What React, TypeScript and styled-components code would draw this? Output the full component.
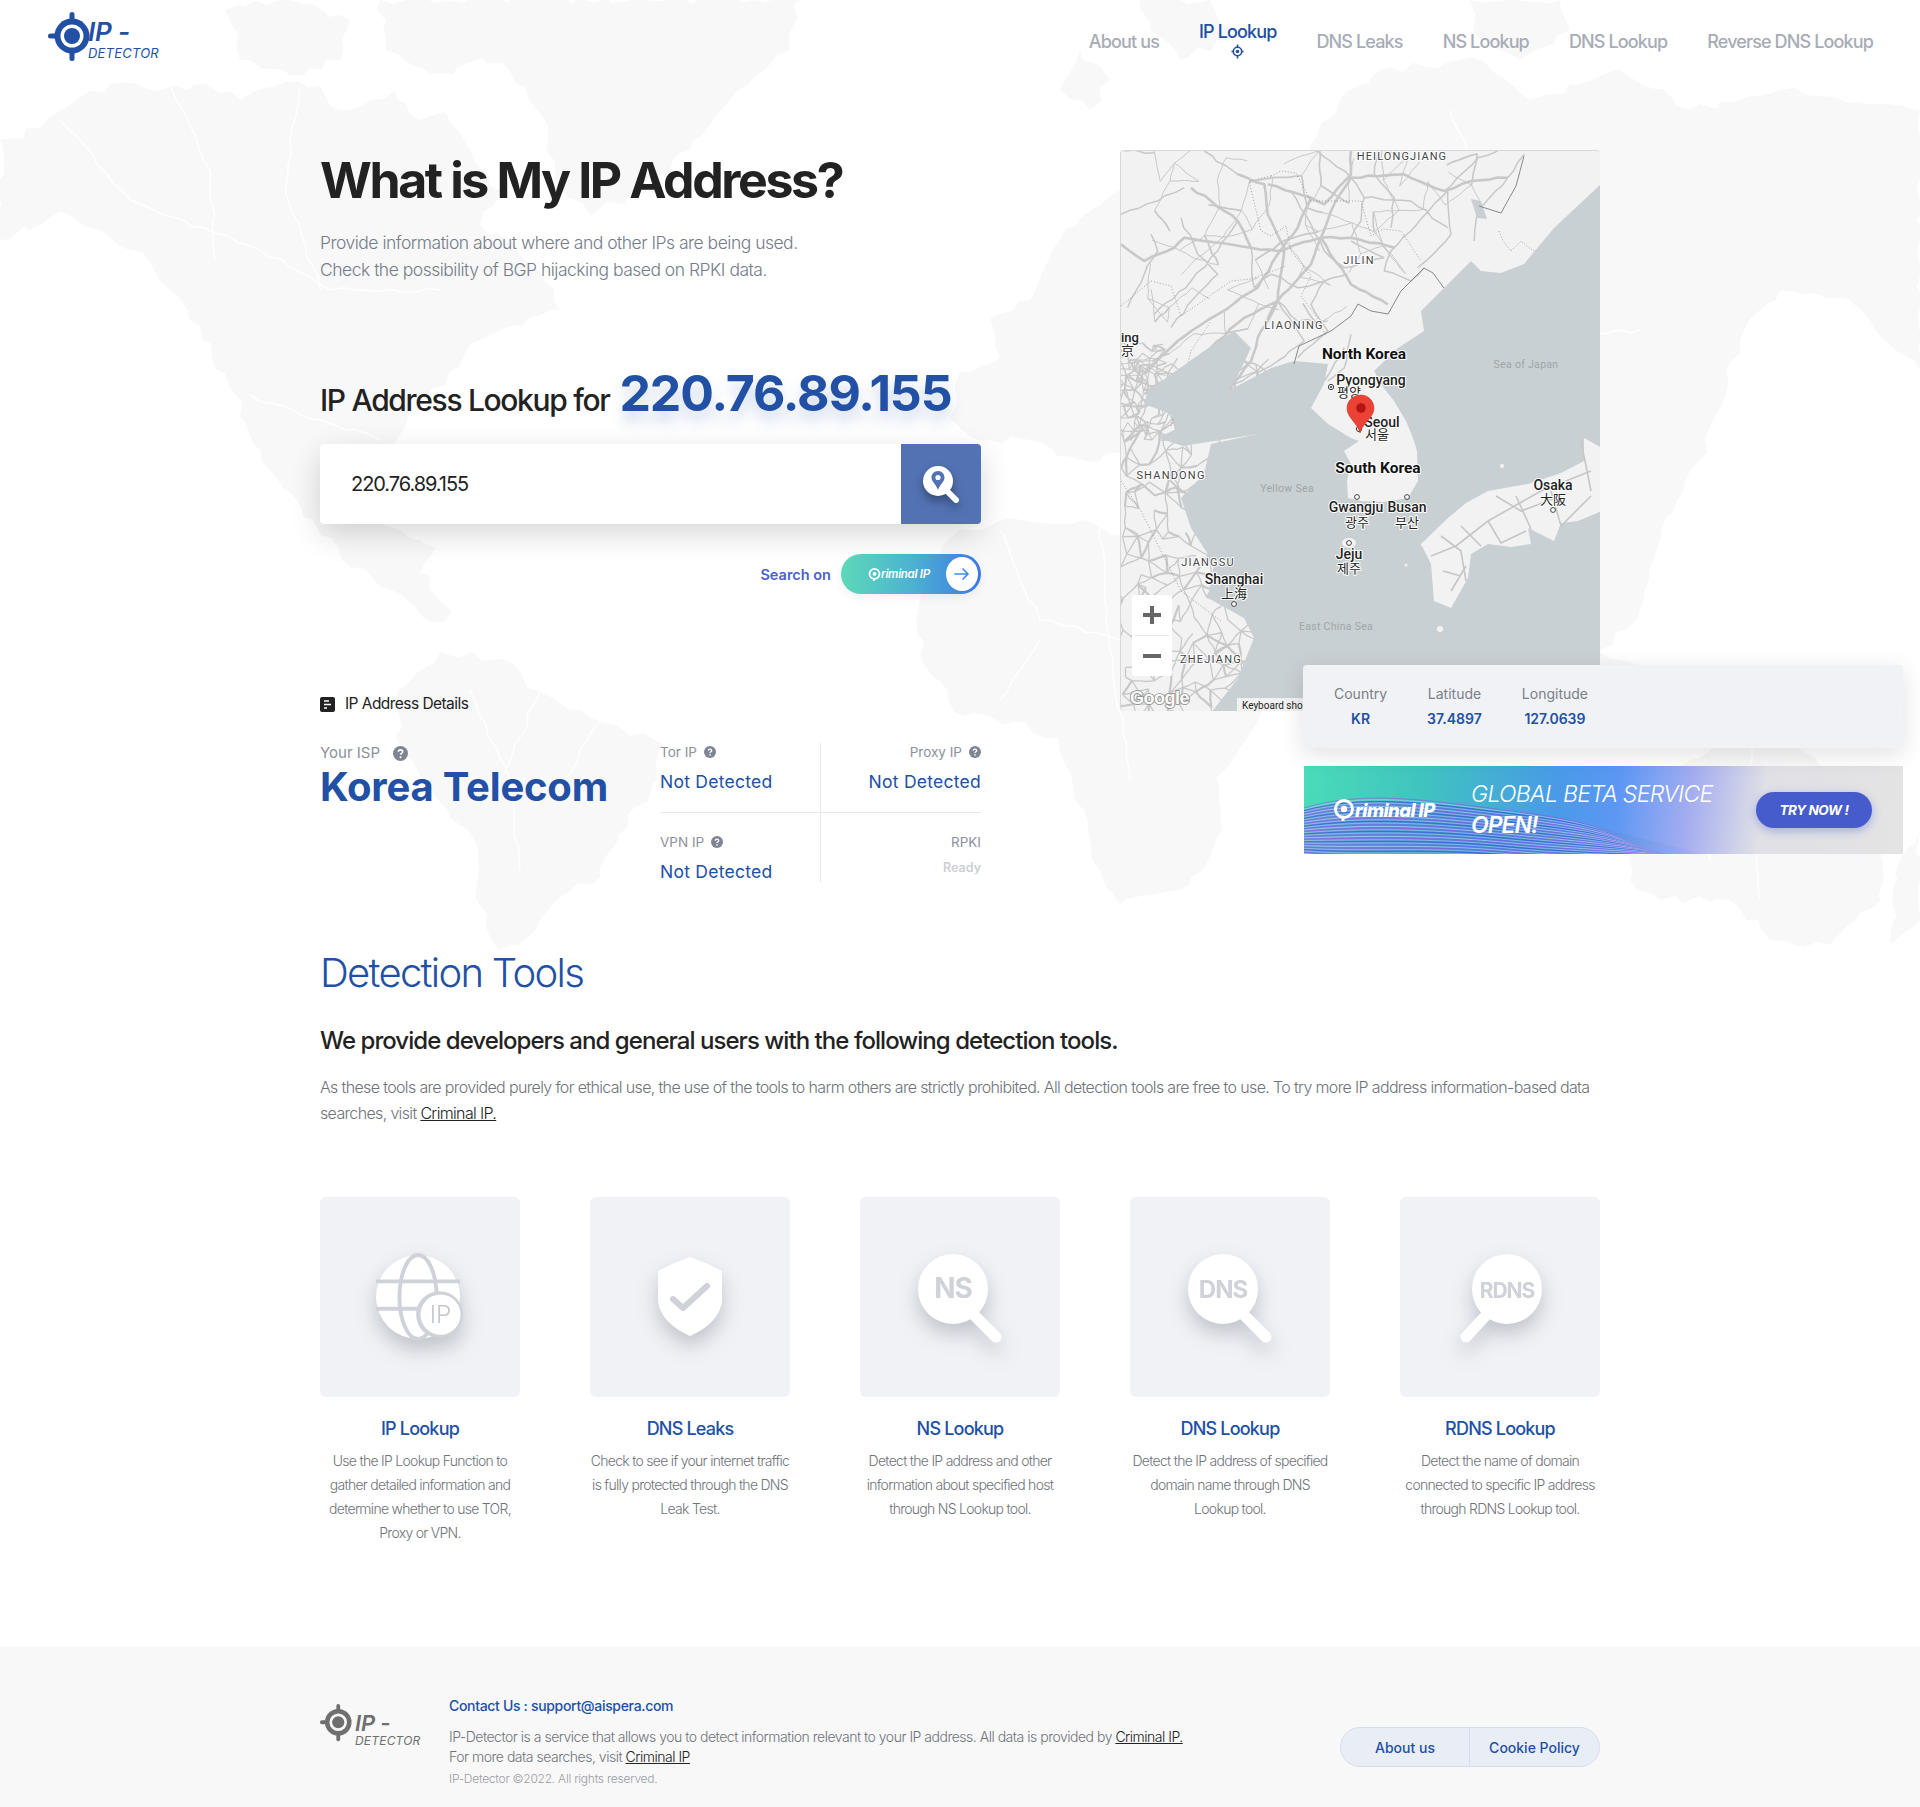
import React from "react";
import styled, { createGlobalStyle } from "styled-components";

const BLUE = "#2150a5";
const FONT = `Inter, "Noto Sans", sans-serif`;
const ROBOTO = `Roboto, "Noto Sans CJK KR", sans-serif`;

const Global = createGlobalStyle`
  html, body { margin: 0; padding: 0; background: #fff; }
  body { font-family: ${FONT}; color: #222; width: 1920px; }
  * { box-sizing: border-box; }
  a { color: inherit; }
`;

const Page = styled.div`
  position: relative;
  width: 1920px;
  height: 1807px;
  overflow: hidden;
  display: flex;
  flex-direction: column;
`;
const WorldLayer = styled.svg`
  position: absolute;
  left: 0;
  top: 0;
  width: 1920px;
  height: 960px;
  z-index: 0;
`;
const Header = styled.header`
  position: relative;
  z-index: 1;
  height: 150px;
  padding: 12px 47px 0 48px;
  display: flex;
  justify-content: space-between;
  align-items: flex-start;
`;
const LogoBox = styled.div<{ $small?: boolean }>`
  display: flex;
  align-items: flex-start;
  color: ${(p) => (p.$small ? "#6f6f6f" : BLUE)};
  svg { flex-shrink: 0; }
`;
const LogoWords = styled.div<{ $small?: boolean }>`
  margin-left: ${(p) => (p.$small ? -3 : -10)}px;
  padding-top: ${(p) => (p.$small ? 8 : 7)}px;
  font-style: italic;
  display: flex;
  flex-direction: column;
`;
const LogoIP = styled.span<{ $small?: boolean }>`
  font-size: ${(p) => (p.$small ? 22 : 26)}px;
  line-height: ${(p) => (p.$small ? 22 : 26)}px;
  font-weight: 600;
  letter-spacing: -0.2px;
`;
const LogoDet = styled.span<{ $small?: boolean }>`
  font-size: ${(p) => (p.$small ? 12 : 13)}px;
  line-height: ${(p) => (p.$small ? 14 : 16)}px;
  font-weight: 400;
  letter-spacing: 0.2px;
`;
const Nav = styled.nav`
  display: flex;
  gap: 40px;
  align-items: flex-start;
  padding-top: 9px;
`;
const NavItem = styled.a<{ $active?: boolean }>`
  display: flex;
  flex-direction: column;
  align-items: center;
  font-size: 18px;
  font-weight: 500;
  letter-spacing: -0.86px;
  line-height: 22px;
  padding-top: ${(p) => (p.$active ? 0 : 10)}px;
  color: ${(p) => (p.$active ? BLUE : "#a7acb6")};
  svg { margin-top: 1px; }
`;
const Main = styled.main`
  position: relative;
  z-index: 1;
  padding-left: 320px;
  flex: 1;
`;
const Hero = styled.section`
  display: flex;
  gap: 139px;
  align-items: flex-start;
`;
const LeftCol = styled.div`
  width: 661px;
  display: flex;
  flex-direction: column;
`;
const Title = styled.h1`
  margin: 0;
  font-size: 50px;
  line-height: 60px;
  font-weight: 700;
  letter-spacing: -2.4px;
  color: #222;
`;
const Lead = styled.p`
  margin: 19px 0 0;
  font-size: 17.5px;
  line-height: 27px;
  font-weight: 300;
  letter-spacing: -0.5px;
  color: #757c8a;
`;
const LookupLine = styled.div`
  margin-top: 79px;
  display: flex;
  align-items: center;
  gap: 10px;
  height: 62px;
`;
const LookupLabel = styled.span`
  font-size: 30px;
  font-weight: 500;
  letter-spacing: -1.33px;
  color: #222;
  padding-top: 13px;
`;
const LookupIP = styled.span`
  font-size: 50px;
  font-weight: 700;
  letter-spacing: -1.1px;
  color: ${BLUE};
  text-shadow: 0 10px 14px rgba(33, 80, 165, 0.22);
`;
const SearchBox = styled.div`
  margin-top: 20px;
  height: 80px;
  background: #fff;
  border-radius: 4px;
  box-shadow: 0 10px 30px rgba(0, 0, 0, 0.16);
  display: flex;
  align-items: center;
  justify-content: space-between;
`;
const SearchValue = styled.span`
  margin-left: 31px;
  font-size: 20px;
  font-weight: 400;
  letter-spacing: -1.05px;
  color: #222;
`;
const SearchBtn = styled.div`
  width: 80px;
  height: 80px;
  background: #5272b3;
  border-radius: 0 4px 4px 0;
  display: flex;
  align-items: center;
  justify-content: center;
`;
const SearchOn = styled.div`
  margin-top: 30px;
  display: flex;
  justify-content: flex-end;
  align-items: center;
  gap: 10px;
`;
const SearchOnText = styled.span`
  font-size: 14.5px;
  font-weight: 600;
  color: #4a5fd0;
`;
const CriminalPill = styled.div`
  width: 140px;
  height: 40px;
  border-radius: 20px;
  background: linear-gradient(90deg, #5cd9b8 0%, #4cb3d0 50%, #3c78e8 100%);
  display: flex;
  align-items: center;
  justify-content: space-between;
  padding: 0 3px 0 27px;
  box-shadow: 0 4px 10px rgba(0, 0, 0, 0.06);
  color: #fff;
`;
const PillCircle = styled.div`
  width: 32px;
  height: 34px;
  border-radius: 50%;
  background: #fff;
  display: flex;
  align-items: center;
  justify-content: center;
`;
const MiniBrand = styled.span`
  display: flex;
  align-items: center;
  font-size: 11.5px;
  font-style: italic;
  font-weight: 600;
  letter-spacing: -0.3px;
`;
const DetailsHead = styled.div`
  margin-top: 101px;
  display: flex;
  align-items: center;
  gap: 10px;
  font-size: 15.5px;
  letter-spacing: -0.55px;
  color: #222;
  line-height: 18px;
`;
const DetailsRow = styled.div`
  margin-top: 30px;
  display: flex;
  justify-content: space-between;
  align-items: flex-start;
`;
const IspLabel = styled.div`
  display: flex;
  align-items: center;
  gap: 13px;
  font-size: 15px;
  line-height: 18px;
  color: #8c919c;
  margin-top: 1px;
`;
const IspName = styled.div`
  font-size: 40px;
  line-height: 46px;
  font-weight: 700;
  letter-spacing: -0.2px;
  color: ${BLUE};
  margin-top: 2px;
`;
const StatGrid = styled.div`
  width: 321px;
  display: grid;
  grid-template-columns: 160px 161px;
  grid-template-rows: 69px 70px;
`;
const StatCell = styled.div<{ $right?: boolean; $bottom?: boolean }>`
  display: flex;
  flex-direction: column;
  align-items: ${(p) => (p.$right ? "flex-end" : "flex-start")};
  border-left: ${(p) => (p.$right ? "1px solid #e6e8ec" : "none")};
  border-top: ${(p) => (p.$bottom ? "1px solid #e6e8ec" : "none")};
  padding-top: ${(p) => (p.$bottom ? 20 : 0)}px;
`;
const StatLabel = styled.div`
  display: flex;
  align-items: center;
  gap: 7px;
  font-size: 13.5px;
  line-height: 18px;
  color: #8c919c;
`;
const StatValue = styled.div`
  margin-top: 10px;
  font-size: 17.5px;
  line-height: 22px;
  letter-spacing: 0.25px;
  color: ${BLUE};
`;
const StatReady = styled.div`
  margin-top: 8px;
  font-size: 12.5px;
  line-height: 18px;
  font-weight: 600;
  color: #cdcfd3;
`;
const RightCol = styled.div`
  width: 783px;
  display: flex;
  flex-direction: column;
`;
const MapFrame = styled.div`
  position: relative;
  width: 480px;
  height: 561px;
  border-radius: 4px;
  overflow: hidden;
  border: 1px solid #d6d8da;
  border-width: 1px 0 0 1px;
  background: #f2f2f2;
  svg { display: block; }
`;
const ZoomCtl = styled.div`
  position: absolute;
  left: 11px;
  top: 444px;
  width: 40px;
  height: 81px;
  background: #fff;
  border-radius: 2px;
  display: flex;
  flex-direction: column;
  align-items: center;
`;
const ZoomBtn = styled.div`
  flex: 1;
  display: flex;
  align-items: center;
  justify-content: center;
  width: 34px;
  & + & { border-top: 1px solid #e6e6e6; }
`;
const InfoPanel = styled.div`
  position: relative;
  z-index: 2;
  margin: -46px 0 0 183px;
  width: 600px;
  height: 83px;
  background: #f0f2f6;
  border-radius: 4px;
  box-shadow: 0 6px 24px rgba(0, 0, 0, 0.12);
  padding: 20px 0 0 31px;
  display: flex;
  gap: 40px;
`;
const InfoCell = styled.div`
  display: flex;
  flex-direction: column;
  align-items: center;
  gap: 7px;
`;
const InfoLabel = styled.div`
  font-size: 14px;
  line-height: 18px;
  color: #7b7f87;
`;
const InfoValue = styled.div`
  font-size: 14px;
  line-height: 18px;
  font-weight: 600;
  color: ${BLUE};
`;
const Banner = styled.div`
  position: relative;
  margin: 18px 0 0 184px;
  width: 599px;
  height: 88px;
  overflow: hidden;
  background: linear-gradient(98deg, #4bdcb8 0%, #3fc4c0 20%, #4a9ae8 42%, #5c97f4 52%, #a4adf0 64%, #e0e0e6 76%, #e4e4e4 100%);
  display: flex;
  align-items: center;
  color: #fff;
  svg.wave { position: absolute; left: 0; top: 0; }
`;
const BannerBrand = styled.div`
  position: relative;
  margin-left: 29px;
  width: 138px;
  display: flex;
  align-items: center;
  font-size: 18.5px;
  font-weight: 800;
  font-style: italic;
  letter-spacing: -0.6px;
`;
const BannerText = styled.div`
  position: relative;
  font-size: 23px;
  line-height: 31px;
  font-style: italic;
  font-weight: 300;
  letter-spacing: -0.68px;
  width: 285px;
  b { font-weight: 600; letter-spacing: -1px; }
`;
const BannerBtn = styled.div`
  position: relative;
  width: 116px;
  height: 36px;
  border-radius: 18px;
  background: #465ccd;
  box-shadow: 0 3px 10px rgba(70, 92, 205, 0.4);
  display: flex;
  align-items: center;
  justify-content: center;
  font-size: 13.5px;
  font-weight: 700;
  font-style: italic;
  letter-spacing: -0.4px;
`;
const Tools = styled.section`
  padding-top: 67px;
  width: 1280px;
`;
const ToolsTitle = styled.h2`
  margin: 0;
  font-size: 40px;
  line-height: 48px;
  font-weight: 300;
  letter-spacing: -1.7px;
  color: ${BLUE};
`;
const ToolsSub = styled.h3`
  margin: 29px 0 0;
  font-size: 24px;
  line-height: 30px;
  font-weight: 500;
  letter-spacing: -0.95px;
  color: #222;
`;
const ToolsText = styled.p`
  margin: 18px 0 0;
  font-size: 16px;
  line-height: 26px;
  font-weight: 300;
  letter-spacing: -0.65px;
  color: #6f737a;
  a { color: #222; }
`;
const CardRow = styled.div`
  margin-top: 71px;
  display: flex;
  gap: 70px;
`;
const Card = styled.div`
  width: 200px;
  display: flex;
  flex-direction: column;
  align-items: center;
`;
const CardTile = styled.div`
  width: 200px;
  height: 200px;
  background: #f0f2f6;
  border-radius: 6px;
  display: flex;
  align-items: center;
  justify-content: center;
  svg { overflow: visible; filter: drop-shadow(0 10px 10px rgba(90, 95, 110, 0.32)); }
`;
const CardTitle = styled.div`
  margin-top: 20px;
  font-size: 18px;
  line-height: 24px;
  font-weight: 500;
  letter-spacing: -0.8px;
  color: ${BLUE};
`;
const CardText = styled.div`
  margin-top: 8px;
  font-size: 14px;
  line-height: 24px;
  font-weight: 300;
  letter-spacing: -0.72px;
  text-align: center;
  color: #6f737a;
  white-space: pre;
`;
const Footer = styled.footer`
  position: relative;
  z-index: 1;
  height: 160px;
  background: #f8f8f8;
  padding: 50px 320px 0;
  display: flex;
  justify-content: space-between;
  align-items: flex-start;
`;
const FooterLeft = styled.div`
  display: flex;
  gap: 29px;
`;
const FooterLogoWrap = styled.div`
  width: 100px;
  margin-top: 7px;
`;
const FooterText = styled.div`
  display: flex;
  flex-direction: column;
  margin-top: -1px;
`;
const Contact = styled.div`
  font-size: 14px;
  line-height: 20px;
  font-weight: 500;
  letter-spacing: -0.32px;
  color: ${BLUE};
`;
const FooterP = styled.div`
  margin-top: 11px;
  font-size: 14px;
  line-height: 20px;
  font-weight: 300;
  letter-spacing: -0.49px;
  color: #6f737a;
  a { color: #222; }
`;
const Copy = styled.div`
  margin-top: 3px;
  font-size: 12px;
  line-height: 18px;
  font-weight: 300;
  letter-spacing: -0.25px;
  color: #9a9da3;
`;
const FooterBtns = styled.div`
  margin-top: 30px;
  width: 260px;
  height: 40px;
  display: flex;
  border: 1px solid #d3deef;
  border-radius: 20px;
  background: #e9edf5;
  overflow: hidden;
`;
const FooterBtn = styled.a<{ $w: number }>`
  width: ${(p) => p.$w}px;
  display: flex;
  align-items: center;
  justify-content: center;
  font-size: 14px;
  font-weight: 500;
  color: ${BLUE};
  & + & { border-left: 1px solid #d3deef; }
`;

/* ---------- drawings ---------- */
const Target = ({ size = 50, color = BLUE, hole = "#fff" }: { size?: number; color?: string; hole?: string }) => (
  <svg width={size} height={size} viewBox="0 0 50 50">
    <g fill={color}>
      <rect x="21.5" y="0" width="5" height="49" rx="2.5" />
      <rect x="0" y="21.5" width="30" height="5" rx="2.5" />
      <circle cx="24" cy="24" r="17.5" />
    </g>
    <circle cx="24" cy="24" r="11.5" fill={hole} />
    <circle cx="24" cy="24" r="8" fill={color} />
  </svg>
);
const NavMark = () => (
  <svg width="13" height="15" viewBox="0 0 13 15">
    <path d="M6.5 0.5V14.5M0.5 7.5H12.5" stroke={BLUE} strokeWidth="1.6" />
    <circle cx="6.5" cy="7.5" r="4.2" fill="#fff" stroke={BLUE} strokeWidth="1.6" />
    <circle cx="6.5" cy="7.5" r="1.8" fill={BLUE} />
  </svg>
);
const Help = ({ size = 14 }: { size?: number }) => (
  <svg width={size} height={size} viewBox="0 0 14 14">
    <circle cx="7" cy="7" r="7" fill="#7e8595" />
    <path d="M5 5.4C5 4.2 6 3.6 7 3.6S9 4.3 9 5.4C9 6.8 7 6.8 7 8.2" fill="none" stroke="#fff" strokeWidth="1.5" />
    <circle cx="7" cy="10.4" r="0.95" fill="#fff" />
  </svg>
);
const Lens = ({ size, color = "#fff" }: { size: number; color?: string }) => (
  <svg width={size} height={size} viewBox="0 0 20 22">
    <circle cx="10" cy="10" r="8.5" fill="none" stroke={color} strokeWidth="3" />
    <path d="M9 21V18" stroke={color} strokeWidth="3" strokeLinecap="round" />
    <circle cx="10" cy="10" r="3.2" fill={color} />
  </svg>
);

/* ---------- shared noise ---------- */
type P = [number, number];
const mulberry = (a: number) => () => {
  a |= 0;
  a = (a + 0x6d2b79f5) | 0;
  let t = Math.imul(a ^ (a >>> 15), 1 | a);
  t = (t + Math.imul(t ^ (t >>> 7), 61 | t)) ^ t;
  return ((t ^ (t >>> 14)) >>> 0) / 4294967296;
};
const rnd = mulberry(1234);
const wiggle = (pts: P[], amp: number, step = 9): string => {
  let out = `M${pts[0][0].toFixed(1)} ${pts[0][1].toFixed(1)}`;
  for (let i = 1; i < pts.length; i++) {
    const [ax, ay] = pts[i - 1];
    const [bx, by] = pts[i];
    const n = Math.max(1, Math.round(Math.hypot(bx - ax, by - ay) / step));
    for (let k = 1; k <= n; k++) {
      const t = k / n;
      const j = k === n ? 0 : amp;
      out += `L${(ax + (bx - ax) * t + (rnd() - 0.5) * j).toFixed(1)} ${(ay + (by - ay) * t + (rnd() - 0.5) * j).toFixed(1)}`;
    }
  }
  return out;
};
const rough = (d: string, amp: number, step: number, closed: boolean) =>
  d
    .split("M")
    .filter(Boolean)
    .map((s) => {
      const nums = (s.match(/-?\d+(\.\d+)?/g) ?? []).map(Number);
      const pts: P[] = [];
      for (let i = 0; i + 1 < nums.length; i += 2) pts.push([nums[i], nums[i + 1]]);
      if (closed) pts.push(pts[0]);
      return wiggle(pts, amp, step) + (closed ? "Z" : "");
    })
    .join("");

const WORLD: string[] = [
  "M0 140L40 128 70 105 110 84 165 88 205 84 240 100 285 82 320 86 340 110 395 90 420 120 445 112 470 150 500 190 480 225 510 245 545 282 560 310 500 330 470 345 445 385 410 412 392 452 366 470 372 520 400 530 436 548 420 572 452 612 430 622 392 590 342 560 300 505 262 462 236 395 190 320 150 262 100 230 60 212 0 240Z",
  "M225 10L290 0 350 20 340 60 290 75 240 60ZM380 0L500 0 490 60 430 74 386 50Z",
  "M440 0L800 0 790 50 730 100 690 150 640 190 590 215 555 180 545 120 510 72 470 50Z",
  "M398 690L440 652 505 660 540 692 600 722 664 745 650 795 618 835 600 876 552 905 520 945 498 950 480 905 478 850 438 800 400 745Z",
  "M930 568L960 530 1010 518 1090 522 1130 545 1172 548 1204 622 1236 650 1292 650 1258 722 1216 778 1222 830 1190 884 1120 905 1092 860 1072 780 1058 738 1014 722 964 716 924 664 918 610Z",
  "M978 440L950 418 960 372 1000 358 990 318 1030 300 1060 240 1120 190 1168 210 1148 260 1180 280 1220 200 1290 180 1340 100 1380 70 1480 60 1530 100 1620 70 1690 110 1780 90 1920 110 1920 370 1850 300 1780 290 1740 340 1700 460 1660 540 1640 610 1600 650 1540 590 1500 610 1470 680 1420 610 1380 540 1310 540 1290 600 1220 560 1170 520 1130 450 1080 460 1030 440Z",
  "M1470 0L1560 0 1570 30 1520 60 1480 40ZM1140 0L1210 0 1230 40 1180 60 1150 30ZM1080 50L1110 80 1090 110 1060 90Z",
  "M1630 820L1690 760 1760 720 1830 770 1880 850 1880 900 1830 945 1770 940 1730 900 1660 900 1630 880Z",
  "M1560 640L1620 660 1680 690 1730 700 1710 720 1640 700 1580 680Z",
  "M1900 860L1920 830 1920 920 1890 945Z",
].map((d) => rough(d.replace(/Z/g, ""), 9, 11, true));
const WORLD_LINES: string[] = [
  "M60 120L130 200 260 250 330 290 440 290",
  "M170 85L210 170 215 260M300 90L285 190 320 290",
  "M250 395L320 420 380 440",
  "M470 690L510 780 520 870M540 692L500 780 470 800M600 722L550 800",
  "M1000 530L1040 620 1120 640 1200 640M1100 525L1110 650 1130 780M1040 640L1000 700",
  "M1300 200L1350 300 1500 340 1640 330M1120 290L1260 340 1380 420 1500 440 1560 560M1450 110L1500 240",
  "M1680 770L1710 860M1750 730L1760 900",
].map((d) => rough(d, 5, 12, false));
const World = () => (
  <WorldLayer viewBox="0 0 1920 960" aria-hidden>
    {WORLD.map((d, i) => (
      <path key={i} d={d} fill="#f8f8f9" />
    ))}
    {WORLD_LINES.map((d, i) => (
      <path key={i} d={d} fill="none" stroke="#fff" strokeWidth="1.4" />
    ))}
  </WorldLayer>
);

/* ---------- map ---------- */
const z: (l: number[]) => P[] = (l) => {
  const r: P[] = [];
  for (let i = 0; i < l.length; i += 2) r.push([l[i] / 3 - 10, l[i + 1] / 3 - 10]);
  return r;
};
const MAJOR = [
  [240,140,300,180,380,240,420,320,500,330,630,290,720,290,850,320],
  [380,100,460,130,470,220,520,320,500,480,460,560],
  [720,30,720,100,640,190,600,170,470,130],
  [600,170,560,260,500,340,440,440,320,520,200,600,100,700],
  [720,110,660,210,630,290,600,370,500,480],
  [720,110,880,100,1000,150,1080,120,1190,110],
  [30,310,100,360,190,320,220,290,420,320],
  [500,480,400,530,300,620,250,660,100,760],
  [500,480,440,590,420,660,350,750],
  [630,290,720,430,830,490],
].map((l) => wiggle(z(l), 2.2)).join("");
const MINOR = [
  [280,30,380,100],[620,30,720,110],[720,110,760,170,750,240,720,290],
  [120,280,140,330,100,400,50,500],[210,230,260,340,320,400,250,470,180,560],
  [420,320,430,440],[1010,150,900,270,840,330,820,390,900,420,940,380],
  [500,480,560,540,650,540],[500,480,580,600,500,660,370,730],
  [710,400,640,420,600,490,650,570,560,650],[820,350,720,300],
  [1240,40,1190,110,1100,210,1090,300],[1160,30,1100,50,1000,150],
  [800,30,790,100,850,170,840,260],[540,150,600,250,640,330,700,380,820,350],
  [380,240,320,330,240,420,130,520],[1010,150,1020,280,920,380],
  [640,420,560,440,480,400,430,440],[760,170,900,180,1010,260],
  [40,30,130,35],[220,140,140,180,30,220],
  [700,620,640,720],[720,580,700,680,650,720],[420,660,360,700,370,750],
].map((l) => wiggle(z(l), 3)).join("");

const BORDER_PTS: P[] = [[173, 213], [210, 180], [237, 153], [267, 163], [303, 117], [323, 137]];
const inChina = (x: number, y: number) => {
  if (x < 173) return true;
  if (x > 400) return false;
  if (x > 323) return y < 62;
  for (let i = 1; i < BORDER_PTS.length; i++) {
    const [ax, ay] = BORDER_PTS[i - 1];
    const [bx, by] = BORDER_PTS[i];
    if (x <= bx) return y < ay + ((by - ay) * (x - ax)) / (bx - ax) - 6;
  }
  return false;
};
const mesh = (x0: number, x1: number, y0: number, y1: number, gap: number, reach: number, prob: number) => {
  const nodes: P[] = [];
  for (let x = x0; x < x1; x += gap)
    for (let y = y0; y < y1; y += gap) {
      const n: P = [x + rnd() * gap * 0.8, y + rnd() * gap * 0.8];
      if (inChina(n[0], n[1])) nodes.push(n);
    }
  let thin = "";
  let thick = "";
  nodes.forEach((a) =>
    nodes.forEach((b) => {
      const d = Math.hypot(a[0] - b[0], a[1] - b[1]);
      if (d > 0 && d < reach && a[0] <= b[0] && rnd() < prob) {
        const s = wiggle([a, b], 1.8, 7);
        if (rnd() < 0.22) thick += s;
        else thin += s;
      }
    })
  );
  return { thin, thick };
};
const NE_MESH = mesh(-5, 400, -5, 210, 25, 36, 0.42);
const SW_MESH = mesh(-6, 150, 205, 570, 15, 23, 0.6);
const BJ_MESH = mesh(-6, 50, 190, 290, 8, 13, 0.55);

const WATER = "M481 32L433 77 403 113 380 122 360 120 350 110 323 137 300 160 303 180 277 197 253 220 262 236 273 250 285 270 292 287 296 300 297 330 287 347 262 351 240 350 227 347 226 330 230 313 223 300 238 290 230 287 207 273 190 257 203 233 207 213 173 210 150 217 107 240 118 222 130 197 113 180 73 207 27 240 23 253 50 263 57 277 37 287 62 295 137 283 90 293 83 323 60 347 70 377 93 413 87 447 123 467 133 487 117 527 90 562 481 562Z";
const JAPAN = "M481 297L463 287 463 310 440 322 407 333 367 340 345 352 327 367 300 393 310 413 313 450 330 457 347 427 350 403 367 393 390 396 410 393 407 377 433 390 440 372 457 370 481 360Z";
const JAPAN_ROADS = [
  "M320 385L340 400 345 430M310 405L335 395 367 370 420 340 470 320","M340 375L360 395M367 370L380 392 405 380M395 345L410 378M430 340L440 375 470 345M460 290L470 340","M375 345L400 360 440 345M322 420L340 425M330 440L345 415",
];
const DOTS: string[] = [
  "M378 80L382 90 390 100 400 90 412 100 430 95 445 88 460 60",
  "M150 25L128 30 140 80 150 85 165 75 170 100 190 125 180 145 195 165 205 185",
  "M150 25L160 20 175 22 190 50 240 50 250 85 262 78 280 80 300 110",
  "M0 155L30 130 50 135 60 165 110 130 130 128 165 115",
  "M50 275L60 240 70 200 90 170",
  "M0 330L20 360 40 400 60 440 100 470",
];
const BORDERS = "M173 213L178 195 210 180 230 165 237 153 250 160 267 163 280 140 303 117 312 122 323 137M358 55L380 62 395 35 403 5";

const LABELS: { t: string; x: number; y: number; s: number; w?: number; c?: string; ls?: number; a?: "start" | "middle" }[] = [
  { t: "HEILONGJIANG", x: 281, y: 9, s: 11, ls: 1.1, c: "#444" },
  { t: "JILIN", x: 238, y: 113, s: 11, ls: 1.1, c: "#444" },
  { t: "LIAONING", x: 173, y: 178, s: 11, ls: 1.2, c: "#444" },
  { t: "ing", x: 0, y: 191, s: 13, a: "start", c: "#222", w: 500 },
  { t: "京", x: 0, y: 204, s: 13, a: "start", c: "#222" },
  { t: "North Korea", x: 243, y: 208, s: 15.5, w: 700, c: "#111" },
  { t: "Pyongyang", x: 250, y: 234, s: 14, w: 500, c: "#222" },
  { t: "평양", x: 228, y: 246, s: 13, c: "#222" },
  { t: "Seoul", x: 261, y: 276, s: 14, w: 500, c: "#222" },
  { t: "서울", x: 256, y: 288, s: 13, c: "#222" },
  { t: "South Korea", x: 257, y: 322, s: 15.5, w: 700, c: "#111" },
  { t: "SHANDONG", x: 50, y: 328, s: 11, ls: 1.2, c: "#444" },
  { t: "Gwangju", x: 235, y: 361, s: 14, w: 500, c: "#222" },
  { t: "광주", x: 236, y: 376, s: 13, c: "#222" },
  { t: "Busan", x: 286, y: 361, s: 14, w: 500, c: "#222" },
  { t: "부산", x: 286, y: 376, s: 13, c: "#222" },
  { t: "Jeju", x: 228, y: 408, s: 14, w: 500, c: "#222" },
  { t: "제주", x: 228, y: 422, s: 13, c: "#222" },
  { t: "Osaka", x: 432, y: 339, s: 14, w: 500, c: "#222" },
  { t: "大阪", x: 432, y: 353, s: 13, c: "#222" },
  { t: "JIANGSU", x: 87, y: 415, s: 11, ls: 1.2, c: "#444" },
  { t: "Shanghai", x: 113, y: 433, s: 14, w: 500, c: "#222" },
  { t: "上海", x: 113, y: 447, s: 13, c: "#222" },
  { t: "ZHEJIANG", x: 90, y: 512, s: 11, ls: 1.2, c: "#444" },
];
const SEAS: { t: string; x: number; y: number }[] = [
  { t: "Sea of Japan", x: 405, y: 217 },
  { t: "Yellow Sea", x: 166, y: 341 },
  { t: "East China Sea", x: 215, y: 479 },
];
const PLACE_DOTS: P[] = [[236, 346], [286, 346], [228, 392], [432, 359], [113, 453]];

const RegionMap = () => (
  <svg width="480" height="561" viewBox="0 0 480 561">
    <rect width="480" height="561" fill="#f2f2f2" />
    <g fill="none" stroke="#c8c8c8" strokeLinejoin="round">
      <path d={NE_MESH.thin} strokeWidth="1" />
      <path d={NE_MESH.thick} strokeWidth="1.7" />
      <path d={SW_MESH.thin} strokeWidth="1.3" />
      <path d={SW_MESH.thick} strokeWidth="2.2" />
      <path d={BJ_MESH.thin} strokeWidth="1.1" />
      <path d={BJ_MESH.thick} strokeWidth="1.8" />
      <path d={MINOR} strokeWidth="1.5" />
      <path d={MAJOR} strokeWidth="2.6" />
    </g>
    <g fill="none" stroke="#8a8a8a" strokeWidth="0.8" strokeDasharray="1 2">
      {DOTS.map((d, i) => <path key={i} d={d} />)}
    </g>
    <path d={WATER} fill="#c9d0d3" />
    <path d="M350 48L360 50 366 68 356 67Z" fill="#c9d0d3" />
    <path d={BORDERS} fill="none" stroke="#7d7d7d" strokeWidth="0.9" />
    <path d={JAPAN} fill="#f2f2f2" />
    <g fill="none" stroke="#c6c6c6" strokeWidth="1.6">
      {JAPAN_ROADS.map((d, i) => <path key={i} d={d} />)}
    </g>
    <ellipse cx="228" cy="392" rx="7" ry="5" fill="#f2f2f2" />
    <circle cx="381" cy="315" r="2" fill="#f2f2f2" />
    <circle cx="319" cy="478" r="3" fill="#f2f2f2" />
    <circle cx="302" cy="394" r="2" fill="#f2f2f2" />
    <circle cx="285" cy="414" r="1.5" fill="#f2f2f2" />
    {PLACE_DOTS.map(([x, y], i) => (
      <circle key={i} cx={x} cy={y} r="2.4" fill="#fff" stroke="#444" strokeWidth="1" />
    ))}
    <circle cx="210" cy="236" r="2.6" fill="#fff" stroke="#333" strokeWidth="1" />
    <circle cx="210" cy="236" r="1" fill="#333" />
    <circle cx="238" cy="278" r="2.6" fill="#fff" stroke="#333" strokeWidth="1" />
    <g fontFamily={ROBOTO}>
      {LABELS.map((l) => (
        <text
          key={l.t}
          x={l.x}
          y={l.y}
          fontSize={l.s}
          fontWeight={l.w ?? 400}
          fill={l.c}
          letterSpacing={l.ls ?? 0}
          textAnchor={l.a ?? "middle"}
          stroke="#fff"
          strokeWidth="2"
          paintOrder="stroke"
          strokeLinejoin="round"
        >
          {l.t}
        </text>
      ))}
      {SEAS.map((l) => (
        <text key={l.t} x={l.x} y={l.y} fontSize="10.5" fill="#9ea6a9" textAnchor="middle" letterSpacing="0.3">
          {l.t}
        </text>
      ))}
      <text x="9" y="553" fontSize="18" fontWeight="700" fill="#fafafa" stroke="#8a8a8a" strokeWidth="1.6" paintOrder="stroke" fontFamily="'Liberation Sans', sans-serif" letterSpacing="-0.5">
        Google
      </text>
      <rect x="116" y="547" width="200" height="15" fill="#f1f1f1" />
      <text x="121" y="558" fontSize="10" fill="#222">Keyboard shortcuts</text>
    </g>
    <path d="M240 244C231 244 226 251 226 257C226 267 236 271 239 282C242 271 253 267 253 257C253 251 248 244 240 244Z" fill="#ea4335" stroke="#d33a2c" strokeWidth="0.6" />
    <circle cx="240" cy="257" r="4.8" fill="#b31412" />
  </svg>
);

const IconGlobe = () => (
  <svg width="90" height="90" viewBox="0 0 92 92">
    <circle cx="44" cy="46" r="43" fill="#fff" />
    <g fill="none" stroke="#cfd2d8" strokeWidth="4">
      <ellipse cx="44" cy="46" rx="19" ry="43" />
      <path d="M1 30H87M1 58H87" />
    </g>
    <circle cx="66" cy="64" r="24" fill="#cfd2d8" />
    <circle cx="67" cy="64" r="20.5" fill="#fff" />
    <text x="67" y="73" textAnchor="middle" fontSize="25" fontWeight="300" fill="#c4c7ce" fontFamily={FONT}>IP</text>
  </svg>
);
const IconShield = () => (
  <svg width="66" height="80" viewBox="0 0 66 80">
    <path d="M33 0L51 7 65 14V42C65 58 50 72 33 79C16 72 1 58 1 42V14L15 7Z" fill="#fff" />
    <path d="M16 42L26 51 50 29" fill="none" stroke="#cfd2d8" strokeWidth="6" strokeLinecap="round" strokeLinejoin="round" />
  </svg>
);
const IconLens = ({ t, flip, s }: { t: string; flip?: boolean; s: number }) => (
  <svg width="86" height="86" viewBox="0 0 86 86">
    <path d={flip ? "M34 56L9 83" : "M52 56L79 83"} stroke="#fff" strokeWidth="11" strokeLinecap="round" />
    <circle cx={flip ? 50 : 36} cy="35" r="35" fill="#fff" />
    <text x={flip ? 50 : 36} y="44" textAnchor="middle" fontSize={s} fontWeight="700" letterSpacing="-1" fill="#cfd2d8" fontFamily={FONT}>{t}</text>
  </svg>
);

const TOOLS = [
  { title: "IP Lookup", text: "Use the IP Lookup Function to\ngather detailed information and\ndetermine whether to use TOR,\nProxy or VPN.", icon: <IconGlobe /> },
  { title: "DNS Leaks", text: "Check to see if your internet traffic\nis fully protected through the DNS\nLeak Test.", icon: <IconShield /> },
  { title: "NS Lookup", text: "Detect the IP address and other\ninformation about specified host\nthrough NS Lookup tool.", icon: <IconLens t="NS" s={28} /> },
  { title: "DNS Lookup", text: "Detect the IP address of specified\ndomain name through DNS\nLookup tool.", icon: <IconLens t="DNS" s={24} /> },
  { title: "RDNS Lookup", text: "Detect the name of domain\nconnected to specific IP address\nthrough RDNS Lookup tool.", icon: <IconLens t="RDNS" s={21} flip /> },
];

const NAV = ["About us", "IP Lookup", "DNS Leaks", "NS Lookup", "DNS Lookup", "Reverse DNS Lookup"];

const WAVE_COLORS = ["#9a4fe0", "#a8d0f4", "#2f55c8", "#a8d0f4", "#7a5fe0", "#c4e0f8"];

export default function App() {
  return (
    <Page>
      <Global />
      <World />
      <Header>
        <LogoBox>
          <Target />
          <LogoWords>
            <LogoIP>IP -</LogoIP>
            <LogoDet>DETECTOR</LogoDet>
          </LogoWords>
        </LogoBox>
        <Nav>
          {NAV.map((n) => (
            <NavItem key={n} $active={n === "IP Lookup"}>
              {n}
              {n === "IP Lookup" && <NavMark />}
            </NavItem>
          ))}
        </Nav>
      </Header>
      <Main>
        <Hero>
          <LeftCol>
            <Title>What is My IP Address?</Title>
            <Lead>
              Provide information about where and other IPs are being used.
              <br />
              Check the possibility of BGP hijacking based on RPKI data.
            </Lead>
            <LookupLine>
              <LookupLabel>IP Address Lookup for</LookupLabel>
              <LookupIP>220.76.89.155</LookupIP>
            </LookupLine>
            <SearchBox>
              <SearchValue>220.76.89.155</SearchValue>
              <SearchBtn>
                <svg width="38" height="38" viewBox="0 0 38 38" style={{ filter: "drop-shadow(0 5px 5px rgba(0,0,0,.35))" }}>
                  <path d="M24 25L34 35" stroke="#fff" strokeWidth="6" strokeLinecap="round" />
                  <circle cx="16" cy="16" r="15" fill="#fff" />
                  <path d="M16 6C12 6 9.5 9 9.5 12.500C9.500 17 14 19 16 25C18 19 22.500 17 22.500 12.500C22.500 9 20 6 16 6Z" fill="#5272b3" />
                  <circle cx="16" cy="12.500" r="2.600" fill="#fff" />
                </svg>
              </SearchBtn>
            </SearchBox>
            <SearchOn>
              <SearchOnText>Search on</SearchOnText>
              <CriminalPill>
                <MiniBrand>
                  <Lens size={13} />riminal IP
                </MiniBrand>
                <PillCircle>
                  <svg width="16" height="14" viewBox="0 0 16 14">
                    <path d="M1 7H14M9 2L14 7 9 12" fill="none" stroke="#3f8be0" strokeWidth="1.700" strokeLinecap="round" strokeLinejoin="round" />
                  </svg>
                </PillCircle>
              </CriminalPill>
            </SearchOn>
            <DetailsHead>
              <svg width="15" height="15" viewBox="0 0 15 15">
                <rect width="15" height="15" rx="2" fill="#222" />
                <path d="M4 4H9M4 7.500H11M4 11H7" stroke="#fff" strokeWidth="1.500" />
              </svg>
              IP Address Details
            </DetailsHead>
            <DetailsRow>
              <div>
                <IspLabel>
                  Your ISP <Help size={15} />
                </IspLabel>
                <IspName>Korea Telecom</IspName>
              </div>
              <StatGrid>
                <StatCell>
                  <StatLabel>Tor IP <Help size={12} /></StatLabel>
                  <StatValue>Not Detected</StatValue>
                </StatCell>
                <StatCell $right>
                  <StatLabel>Proxy IP <Help size={12} /></StatLabel>
                  <StatValue>Not Detected</StatValue>
                </StatCell>
                <StatCell $bottom>
                  <StatLabel>VPN IP <Help size={12} /></StatLabel>
                  <StatValue>Not Detected</StatValue>
                </StatCell>
                <StatCell $right $bottom>
                  <StatLabel>RPKI</StatLabel>
                  <StatReady>Ready</StatReady>
                </StatCell>
              </StatGrid>
            </DetailsRow>
          </LeftCol>
          <RightCol>
            <MapFrame>
              <RegionMap />
              <ZoomCtl>
                <ZoomBtn>
                  <svg width="18" height="18" viewBox="0 0 18 18"><path d="M9 0V18M0 9H18" stroke="#666" strokeWidth="4" /></svg>
                </ZoomBtn>
                <ZoomBtn>
                  <svg width="18" height="18" viewBox="0 0 18 18"><path d="M0 9H18" stroke="#666" strokeWidth="4" /></svg>
                </ZoomBtn>
              </ZoomCtl>
            </MapFrame>
            <InfoPanel>
              <InfoCell>
                <InfoLabel>Country</InfoLabel>
                <InfoValue>KR</InfoValue>
              </InfoCell>
              <InfoCell>
                <InfoLabel>Latitude</InfoLabel>
                <InfoValue>37.4897</InfoValue>
              </InfoCell>
              <InfoCell>
                <InfoLabel>Longitude</InfoLabel>
                <InfoValue>127.0639</InfoValue>
              </InfoCell>
            </InfoPanel>
            <Banner>
              <svg className="wave" width="599" height="88" viewBox="0 0 599 88">
                <defs>
                  <linearGradient id="wavefill" x1="0" x2="1" y1="0" y2="0">
                    <stop offset="0" stopColor="#6a86e0" stopOpacity="0.8" />
                    <stop offset="0.5" stopColor="#3f7bd8" stopOpacity="0.7" />
                    <stop offset="1" stopColor="#7a9ad0" stopOpacity="0.1" />
                  </linearGradient>
                </defs>
                <path d="M0 44C60 28 120 36 200 46S330 70 400 88H0Z" fill="url(#wavefill)" />
                {Array.from({ length: 40 }).map((_, i) => (
                  <path
                    key={i}
                    d={`M0 ${42 + i * 1.300}C60 ${24 + i * 2} 120 ${34 + i * 1.500} 200 ${44 + i * 1.400}S${310 + i} ${62 + i} ${340 + i * 1.500} 90`}
                    fill="none"
                    stroke={WAVE_COLORS[i % 6]}
                    strokeOpacity="0.6"
                    strokeWidth="1"
                  />
                ))}
              </svg>
              <BannerBrand>
                <Lens size={22} />riminal IP
              </BannerBrand>
              <BannerText>
                GLOBAL BETA SERVICE
                <br />
                <b>OPEN!</b>
              </BannerText>
              <BannerBtn>TRY NOW !</BannerBtn>
            </Banner>
          </RightCol>
        </Hero>
        <Tools>
          <ToolsTitle>Detection Tools</ToolsTitle>
          <ToolsSub>We provide developers and general users with the following detection tools.</ToolsSub>
          <ToolsText>
            As these tools are provided purely for ethical use, the use of the tools to harm others are strictly prohibited. All detection tools are free to use. To try more IP address information-based data
            <br />
            searches, visit <a href="#">Criminal IP.</a>
          </ToolsText>
          <CardRow>
            {TOOLS.map((t) => (
              <Card key={t.title}>
                <CardTile>{t.icon}</CardTile>
                <CardTitle>{t.title}</CardTitle>
                <CardText>{t.text}</CardText>
              </Card>
            ))}
          </CardRow>
        </Tools>
      </Main>
      <Footer>
        <FooterLeft>
          <FooterLogoWrap>
            <LogoBox $small>
              <Target size={38} color="#6f6f6f" hole="#f8f8f8" />
              <LogoWords $small>
                <LogoIP $small>IP -</LogoIP>
                <LogoDet $small>DETECTOR</LogoDet>
              </LogoWords>
            </LogoBox>
          </FooterLogoWrap>
          <FooterText>
            <Contact>Contact Us : support@aispera.com</Contact>
            <FooterP>
              IP-Detector is a service that allows you to detect information relevant to your IP address. All data is provided by <a href="#">Criminal IP.</a>
              <br />
              For more data searches, visit <a href="#">Criminal IP</a>
            </FooterP>
            <Copy>IP-Detector ©2022. All rights reserved.</Copy>
          </FooterText>
        </FooterLeft>
        <FooterBtns>
          <FooterBtn $w={129}>About us</FooterBtn>
          <FooterBtn $w={131}>Cookie Policy</FooterBtn>
        </FooterBtns>
      </Footer>
    </Page>
  );
}
